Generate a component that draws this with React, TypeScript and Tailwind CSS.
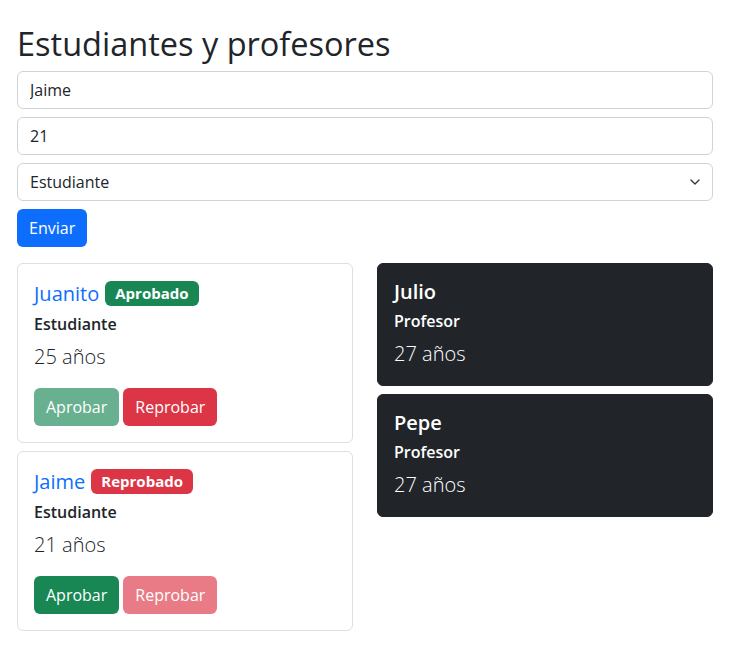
import React, { useState } from "react";

interface Person {
  name: string;
  age: number;
  role: "Estudiante" | "Profesor";
  approved?: boolean;
}

const initial: Person[] = [
  { name: "Juanito", age: 25, role: "Estudiante", approved: true },
  { name: "Jaime", age: 21, role: "Estudiante", approved: false },
  { name: "Julio", age: 27, role: "Profesor" },
  { name: "Pepe", age: 27, role: "Profesor" },
];

const StudentCard: React.FC<{ p: Person; onSet: (v: boolean) => void }> = ({ p, onSet }) => (
  <div className="rounded-md border border-[#dfdfdf] bg-white p-4">
    <h5 className="mb-2 flex items-center gap-[6px] text-[20px] leading-[27px] font-medium text-[#0d6efd]">
      {p.name}
      <span
        className={
          "rounded-md px-[10px] text-[15px] leading-[25px] font-bold text-white " +
          (p.approved ? "bg-[#198754]" : "bg-[#dc3545]")
        }
      >
        {p.approved ? "Aprobado" : "Reprobado"}
      </span>
    </h5>
    <h6 className="mb-2 text-[16px] leading-[19px] font-semibold text-[#212529]">{p.role}</h6>
    <p className="mb-4 text-[20px] leading-[30px] font-light text-[#212529]">{p.age} años</p>
    <div className="flex gap-1">
      <button
        disabled={p.approved}
        onClick={() => onSet(true)}
        className="h-[38px] rounded-md bg-[#198754] px-3 text-[16px] text-white disabled:opacity-65"
      >
        Aprobar
      </button>
      <button
        disabled={!p.approved}
        onClick={() => onSet(false)}
        className="h-[38px] rounded-md bg-[#dc3545] px-3 text-[16px] text-white disabled:opacity-65"
      >
        Reprobar
      </button>
    </div>
  </div>
);

const TeacherCard: React.FC<{ p: Person }> = ({ p }) => (
  <div className="rounded-md border border-[#212529] bg-[#212529] p-4 text-white">
    <h5 className="mb-2 text-[20px] leading-[24px] font-semibold">{p.name}</h5>
    <h6 className="mb-2 text-[16px] leading-[19px] font-semibold">{p.role}</h6>
    <p className="text-[20px] leading-[30px] font-light">{p.age} años</p>
  </div>
);

export default function App() {
  const [people, setPeople] = useState<Person[]>(initial);
  const [name, setName] = useState("Jaime");
  const [age, setAge] = useState("21");
  const [role, setRole] = useState("Estudiante");

  const setApproved = (idx: number, v: boolean) => {
    setPeople(people.map((p, i) => (i === idx ? { ...p, approved: v } : p)));
  };

  const input =
    "block h-[38px] w-full rounded-md border border-[#ced4da] bg-white px-3 text-[16px] text-[#212529] outline-none";

  return (
    <div className="min-h-screen bg-white pl-[17px] pr-[19px] pt-6 font-['Open_Sans',sans-serif] text-[#212529]">
      <h1 className="mb-2 text-[32.5px] leading-[39px] font-medium">Estudiantes y profesores</h1>
      <form
        onSubmit={(e) => {
          e.preventDefault();
        }}
      >
        <input className={input + " mb-2"} value={name} onChange={(e) => setName(e.target.value)} />
        <input className={input + " mb-2"} value={age} onChange={(e) => setAge(e.target.value)} />
        <div className="relative mb-2">
          <select
            className={input + " appearance-none"}
            value={role}
            onChange={(e) => setRole(e.target.value)}
          >
            <option>Estudiante</option>
            <option>Profesor</option>
          </select>
          <svg
            className="pointer-events-none absolute right-[13px] top-[16px]"
            width="10"
            height="6"
            viewBox="0 0 10 6"
            fill="none"
            stroke="#343a40"
            strokeWidth="1.4"
            strokeLinecap="round"
            strokeLinejoin="round"
          >
            <path d="M1 1l4 4 4-4" />
          </svg>
        </div>
        <button className="h-[38px] rounded-md bg-[#0d6efd] px-3 text-[16px] text-white">Enviar</button>
      </form>

      <div className="mt-4 grid grid-cols-2 items-start gap-x-6">
        <div className="flex flex-col gap-2">
          {people.map((p, i) =>
            p.role === "Estudiante" ? (
              <StudentCard key={p.name} p={p} onSet={(v) => setApproved(i, v)} />
            ) : null
          )}
        </div>
        <div className="flex flex-col gap-2">
          {people.filter((p) => p.role === "Profesor").map((p) => (
            <TeacherCard key={p.name} p={p} />
          ))}
        </div>
      </div>
    </div>
  );
}
